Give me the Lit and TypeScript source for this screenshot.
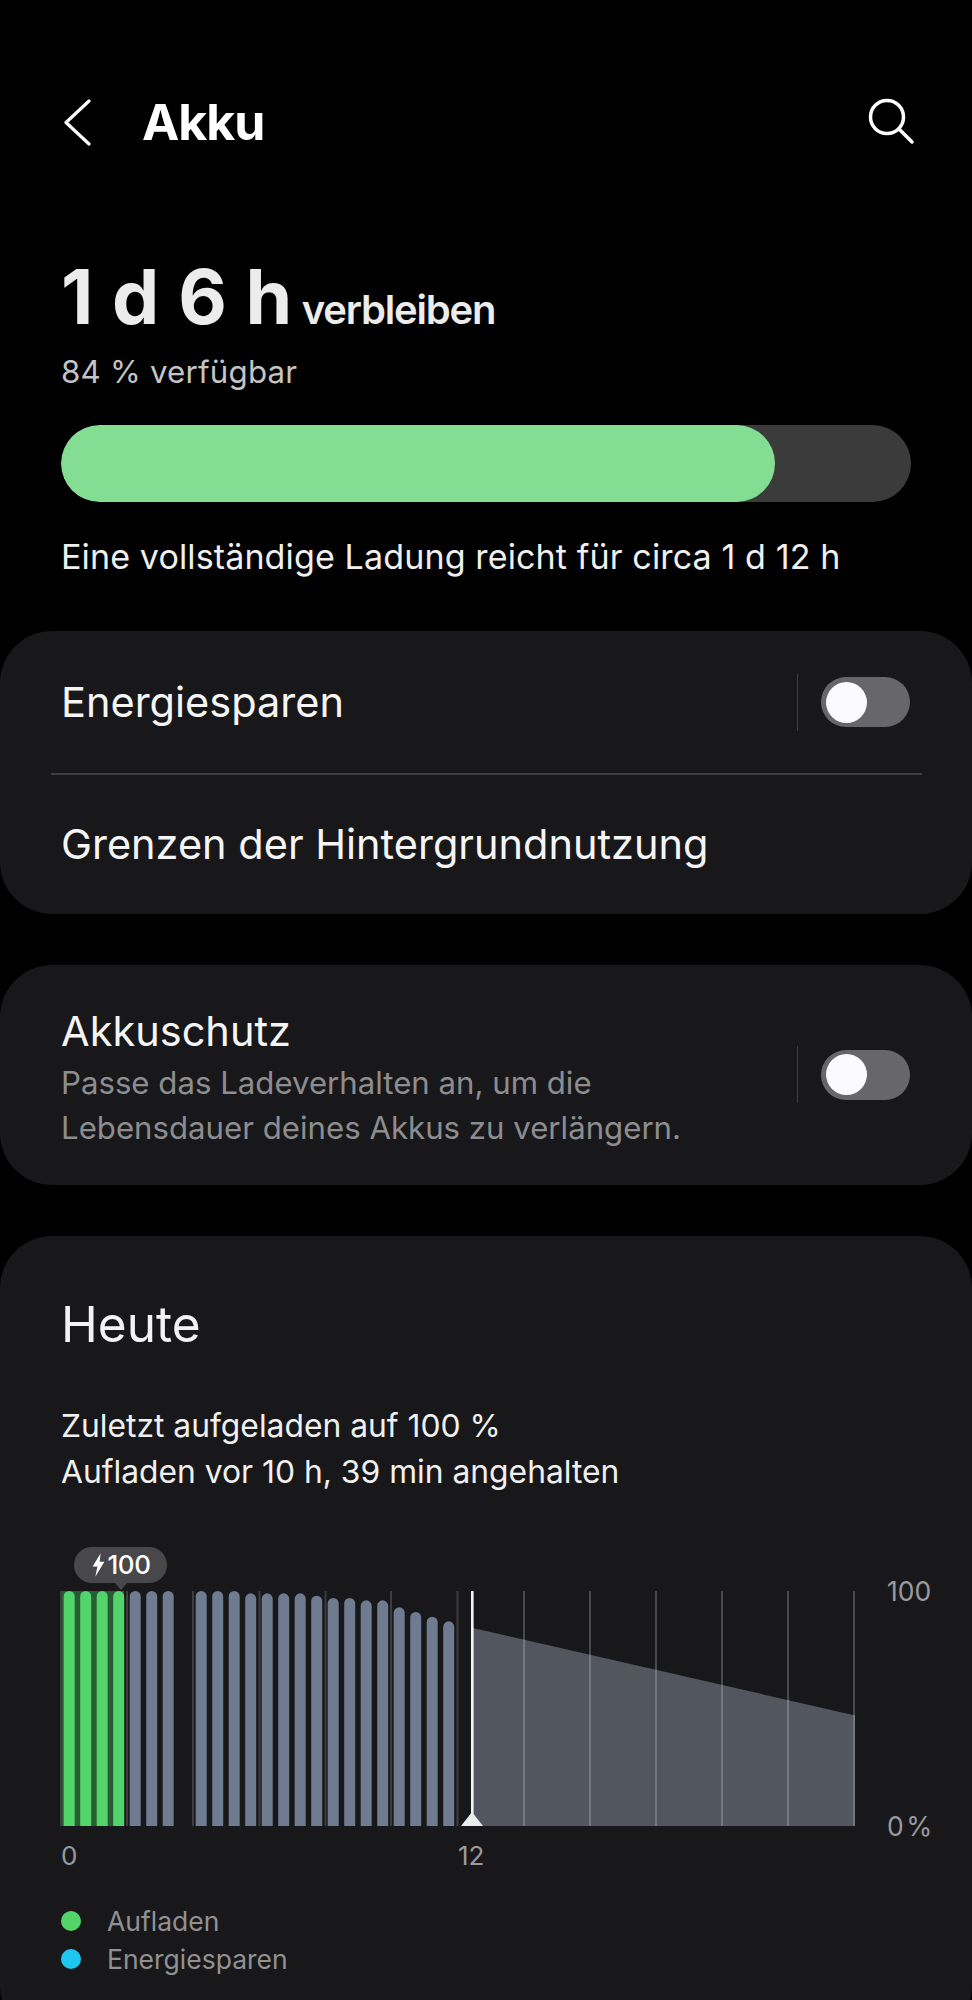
import { LitElement, html, css, svg } from "lit";
import { customElement } from "lit/decorators.js";

const BASE = 235;
const tops = [182,182,182,182,182,182,182,182,182,182,189,189,189,189,196,203,203,210,210,231,245,259,273].map(v => (v - 182) / 3);
const xs = [3.7,20.2,36.7,53.2,69.7,86.2,102.7,135.7,152.2,168.7,185.2,201.7,218.2,234.7,251.2,267.7,284.2,300.7,317.2,333.7,350.2,366.7,383.2];
const grid = [0,66,132,198.5,264.5,330,396.5,463,529,595,661,727,793];
const areaTop = (x: number) => 37 + ((x - 413) * 87) / 380;

function bar(x: number, top: number, i: number) {
  const w = 11, r = 5.5;
  const d = `M${x} ${BASE}V${top + r}a${r} ${r} 0 0 1 ${w} 0V${BASE}Z`;
  return svg`<path d=${d} fill=${i < 4 ? "#53d46a" : "#6f7b90"}></path>`;
}

@customElement("app-root")
export class AppRoot extends LitElement {
  static styles = css`
    :host { display: block; height: 2000px; overflow: hidden; background: #000; color: #f2f2f2; font-family: Inter, "Noto Sans", sans-serif; }
    .header { display: flex; align-items: center; height: 64px; margin-top: 90px; padding: 0 57px 0 62px; }
    .back { width: 32px; height: 48px; flex: none; }
    .title { flex: 1; margin-left: 48px; font-size: 50px; font-weight: 700; line-height: 64px; color: #fff; letter-spacing: -1px; }
    .search { width: 48px; height: 48px; flex: none; }
    .summary { padding: 0 61px; margin-top: 105px; }
    .remain { display: flex; align-items: baseline; gap: 9px; line-height: 76px; height: 76px; }
    .big { font-size: 75px; font-weight: 700; color: #ececec; letter-spacing: 0.5px; }
    .unit { font-size: 40px; font-weight: 600; color: #ececec; letter-spacing: -1.2px; }
    .avail { font-size: 31.3px; line-height: 40px; margin-top: 17px; color: #c4c4c4; letter-spacing: 0.2px; }
    .track { height: 77px; border-radius: 39px; background: #3b3b3b; margin-top: 33px; width: 850px; overflow: hidden; }
    .fill { height: 100%; border-radius: 39px; background: #83de93; }
    .full { font-size: 34.1px; line-height: 44px; margin-top: 33px; color: #efefef; letter-spacing: 0.1px; white-space: nowrap; }
    .card { background: #18181a; border-radius: 52px; margin-top: 51px; }
    .summary + .card { margin-top: 52px; }
    .row { display: flex; align-items: center; height: 142px; padding: 0 62px 0 61px; }
    .row.second { height: 139px; }
    .label { flex: 1; font-size: 41.5px; line-height: 50px; color: #f5f5f5; }
    .rule { height: 1.5px; margin: 0 50px 0 51px; background: #3e3e40; }
    .sep { width: 1.5px; height: 57px; background: #3e3e40; margin-right: 23px; flex: none; }
    .toggle { width: 89px; height: 50px; border-radius: 25px; background: #67676b; display: flex; align-items: center; padding-left: 5px; box-sizing: border-box; flex: none; }
    .thumb { width: 41px; height: 41px; border-radius: 50%; background: #fbfbff; }
    .row.tall { height: 220px; }
    .sub { font-size: 31.2px; line-height: 45px; color: #8d8d8f; margin-top: 5px; }
    .text { flex: 1; padding-top: 8px; }
    .heute { padding: 60px 61px 60px; }
    .heute h2 { margin: 0; font-size: 49.5px; font-weight: 400; line-height: 56px; color: #f3f3f3; }
    .last { margin-top: 51px; font-size: 31.8px; line-height: 46px; color: #f0f0f0; }
    .chart-row { display: flex; margin-top: 96px; margin-left: -1px; position: relative; height: 235px; }
    .chart { width: 794px; height: 235px; display: block; flex: none; overflow: visible; }
    .y { margin-left: 33px; display: flex; flex-direction: column; justify-content: space-between; height: 271px; margin-top: -18px; font-size: 26.5px; line-height: 36px; color: #9a9a9c; white-space: nowrap; word-spacing: -5px; }
    .badge { position: absolute; left: 14px; top: -44px; width: 93px; height: 36px; border-radius: 18px; background: #48484a; display: flex; align-items: center; justify-content: center; gap: 2px; color: #fff; font-size: 26px; font-weight: 500; letter-spacing: -0.5px; }
    .badge::after { content: ""; position: absolute; left: 41px; bottom: -7px; border-left: 6px solid transparent; border-right: 6px solid transparent; border-top: 7px solid #48484a; }
    .bolt { width: 15px; height: 26px; }
    .x { height: 36px; margin-top: 12px; font-size: 26px; line-height: 36px; color: #9a9a9c; margin-left: -1px; display: grid; grid-template-columns: 398px 1fr; }
    .x span:first-child { padding-left: 1px; }
    .legend { margin-top: 28px; display: flex; flex-direction: column; }
    .item { display: flex; align-items: center; height: 38px; gap: 26px; font-size: 26.5px; color: #919193; }
    .dot { width: 20px; height: 20px; border-radius: 50%; flex: none; }
    .green { background: #53d46a; }
    .blue { background: #1dc8ee; }
  `;

  render() {
    return html`
      <div class="header">
        <svg class="back" viewBox="0 0 32 48" fill="none" stroke="#fff" stroke-width="3.2" stroke-linecap="round" stroke-linejoin="round"><path d="M27 3 4 24.5 27 46"></path></svg>
        <div class="title">Akku</div>
        <svg class="search" viewBox="0 0 48 48" fill="none" stroke="#fff" stroke-width="3.5" stroke-linecap="round"><circle cx="20" cy="19" r="16.5"></circle><path d="M32 31 45 44"></path></svg>
      </div>

      <div class="summary">
        <div class="remain"><span class="big">1 d 6 h</span><span class="unit">verbleiben</span></div>
        <div class="avail">84 % verfügbar</div>
        <div class="track"><div class="fill" style="width:${(714 / 850) * 100}%"></div></div>
        <div class="full">Eine vollständige Ladung reicht für circa 1 d 12 h</div>
      </div>

      <div class="card">
        <div class="row">
          <div class="label">Energiesparen</div>
          <div class="sep"></div>
          <div class="toggle"><div class="thumb"></div></div>
        </div>
        <div class="rule"></div>
        <div class="row second"><div class="label">Grenzen der Hintergrundnutzung</div></div>
      </div>

      <div class="card">
        <div class="row tall">
          <div class="text">
            <div class="label">Akkuschutz</div>
            <div class="sub">Passe das Ladeverhalten an, um die<br />Lebensdauer deines Akkus zu verlängern.</div>
          </div>
          <div class="sep"></div>
          <div class="toggle"><div class="thumb"></div></div>
        </div>
      </div>

      <div class="card heute">
        <h2>Heute</h2>
        <div class="last">Zuletzt aufgeladen auf 100 %<br />Aufladen vor 10 h, 39 min angehalten</div>
        <div class="chart-row">
          <div class="badge">
            <svg class="bolt" viewBox="0 0 14 24" fill="#fff"><path d="M9 1 1.5 13.5H6L4 23 12.5 9H8Z"></path></svg>
            <span>100</span>
          </div>
          <svg class="chart" viewBox="0 0 794 235">
            <rect x="0" y="0" width="64" height=${BASE} fill="#285c35"></rect>
            ${grid.map((g, i) => svg`<rect x=${g} y="0" width="2" height=${BASE} fill=${i < 7 ? "#3d3d40" : "#48494b"}></rect>`)}
            <path d="M413 37 793 124V235H413Z" fill="#52565e"></path>
            ${grid.slice(7).map(g => svg`<rect x=${g} y=${areaTop(g)} width="2" height=${BASE - areaTop(g)} fill="#74777d"></rect>`)}
            ${xs.map((x, i) => bar(x, tops[i], i))}
            <rect x="411" y="0" width="2.6" height=${BASE} fill="#f4f4f4"></rect>
            <path d="M412 221 423 235H401Z" fill="#ececec"></path>
          </svg>
          <div class="y"><span>100</span><span>0 %</span></div>
        </div>
        <div class="x"><span>0</span><span>12</span></div>
        <div class="legend">
          <div class="item"><span class="dot green"></span>Aufladen</div>
          <div class="item"><span class="dot blue"></span>Energiesparen</div>
        </div>
      </div>
    `;
  }
}
